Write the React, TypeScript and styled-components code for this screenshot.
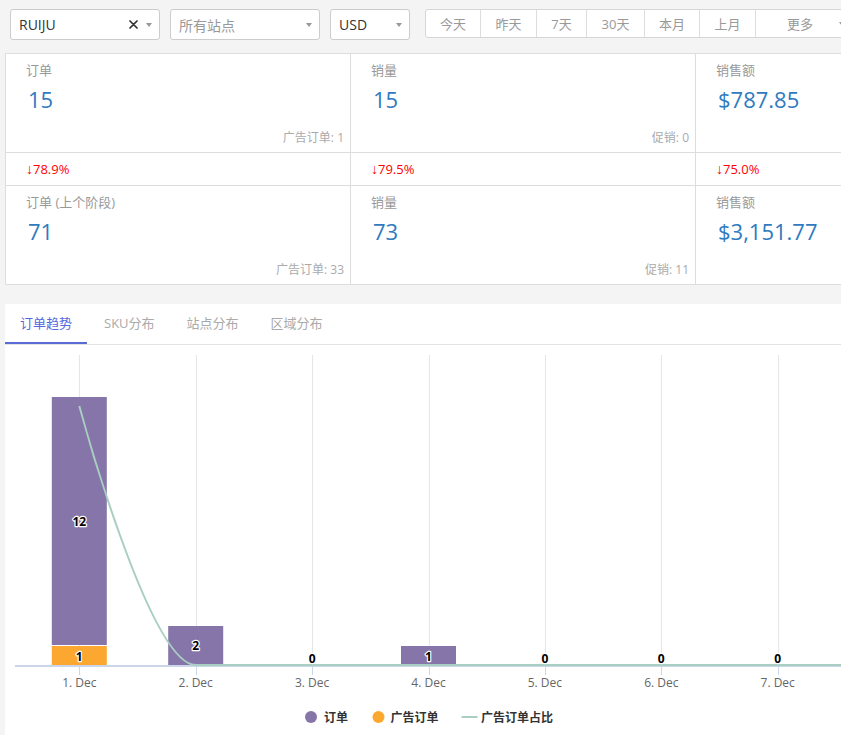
import React from 'react';
import styled, { createGlobalStyle } from 'styled-components';

const GlobalStyle = createGlobalStyle`
  html, body { margin: 0; padding: 0; overflow: hidden; background: #f4f4f4; }
  body { font-family: "Open Sans", "Noto Sans CJK SC", sans-serif; }
`;

const Page = styled.div`
  width: 1050px;
  min-height: 735px;
  background: #f4f4f4;
`;

const TopBar = styled.div`
  display: flex;
  align-items: flex-start;
  padding: 9px 0 0 10px;
`;

const Select = styled.div<{ $w: number; $gap: number }>`
  box-sizing: border-box;
  width: ${p => p.$w}px;
  height: 31px;
  margin-right: ${p => p.$gap}px;
  border: 1px solid #ccc;
  border-radius: 3px;
  background: #fff;
  display: flex;
  align-items: center;
  padding: 0 7px 0 8px;
  font-size: 14px;
`;

const SelectValue = styled.span<{ $placeholder?: boolean }>`
  flex: 1;
  color: ${p => (p.$placeholder ? '#999' : '#333')};
  white-space: nowrap;
`;

const Clear = styled.svg`
  width: 9px;
  height: 9px;
  margin-right: 8px;
`;

const Caret = styled.span<{ $color?: string }>`
  width: 0;
  height: 0;
  border-left: 3.5px solid transparent;
  border-right: 3.5px solid transparent;
  border-top: 4.5px solid ${p => p.$color || '#999'};
`;

const BtnGroup = styled.div`
  display: flex;
  box-sizing: border-box;
  height: 29px;
  border: 1px solid #d6d6d6;
  border-radius: 3px;
  background: #fff;
`;

const Btn = styled.div<{ $w?: number; $first?: boolean }>`
  box-sizing: border-box;
  ${p => (p.$w ? `width: ${p.$w}px;` : 'padding: 0 26px 0 31px;')}
  display: flex;
  align-items: center;
  justify-content: center;
  gap: 26px;
  font-size: 13px;
  color: #999;
  white-space: nowrap;
  border-left: ${p => (p.$first ? 'none' : '1px solid #ddd')};
`;

const Stats = styled.div`
  margin: 13px 0 0 5px;
  display: grid;
  grid-template-columns: repeat(3, 345px);
  width: max-content;
  border-top: 1px solid #ddd;
  border-left: 1px solid #ddd;
  background: #fff;
`;

const StatCell = styled.div`
  box-sizing: border-box;
  height: 99px;
  border-right: 1px solid #ddd;
  border-bottom: 1px solid #ddd;
  padding: 7px 6px 6px 20px;
  display: flex;
  flex-direction: column;
`;

const StatLabel = styled.div`
  font-size: 13px;
  line-height: 18px;
  color: #999;
`;

const StatValue = styled.div`
  margin-top: 5px;
  padding-left: 2px;
  font-size: 22px;
  line-height: 30px;
  color: #2f7bbf;
`;

const StatNote = styled.div`
  margin-top: auto;
  align-self: flex-end;
  font-size: 12px;
  line-height: 16px;
  color: #aaa;
`;

const ChangeCell = styled.div`
  box-sizing: border-box;
  height: 33px;
  border-right: 1px solid #ddd;
  border-bottom: 1px solid #ddd;
  padding-left: 20px;
  display: flex;
  align-items: center;
  font-size: 13px;
  color: #f00;
  white-space: nowrap;
`;

const Arrow = styled.span`
  font-family: "Liberation Sans", "DejaVu Sans", sans-serif;
  font-size: 14px;
`;

const TabPanel = styled.div`
  margin: 19px 0 0 5px;
  background: #fff;
  height: 440px;
`;

const TabBar = styled.div`
  display: flex;
  box-sizing: border-box;
  height: 41px;
  border-bottom: 1px solid #e3e3e3;
`;

const Tab = styled.div<{ $active?: boolean }>`
  box-sizing: border-box;
  height: 40px;
  padding: 0 15px;
  margin-right: 2px;
  line-height: 38px;
  font-size: 13px;
  color: ${p => (p.$active ? '#5867dd' : '#aaa')};
  border-bottom: 2px solid ${p => (p.$active ? '#5b6bd6' : 'transparent')};
`;

const ChartSvg = styled.svg`
  display: block;
  font-family: "Open Sans", "Noto Sans CJK SC", sans-serif;
`;

const stats = [
  { label: '订单', value: '15', note: '广告订单: 1' },
  { label: '销量', value: '15', note: '促销: 0' },
  { label: '销售额', value: '$787.85', note: '' },
];
const changes = ['78.9%', '79.5%', '75.0%'];
const prev = [
  { label: '订单 (上个阶段)', value: '71', note: '广告订单: 33' },
  { label: '销量', value: '73', note: '促销: 11' },
  { label: '销售额', value: '$3,151.77', note: '' },
];

const buttons = [
  { t: '今天', w: 54 },
  { t: '昨天', w: 56 },
  { t: '7天', w: 50 },
  { t: '30天', w: 58 },
  { t: '本月', w: 55 },
  { t: '上月', w: 56 },
];

const PURPLE = '#8675a9';
const ORANGE = '#fca830';
const LINE = '#a9cec2';

const centers = [0, 1, 2, 3, 4, 5, 6].map(i => 74.3 + 116.4 * i);
const days = ['1. Dec', '2. Dec', '3. Dec', '4. Dec', '5. Dec', '6. Dec', '7. Dec'];

const DataLabel: React.FC<{ x: number; y: number; t: string }> = ({ x, y, t }) => (
  <text
    x={x}
    y={y}
    textAnchor="middle"
    dominantBaseline="central"
    fontSize={12}
    fontWeight={700}
    fill="#000"
    stroke="#fff"
    strokeWidth={2.4}
    strokeLinejoin="round"
    paintOrder="stroke"
  >
    {t}
  </text>
);

const Chart: React.FC = () => (
  <ChartSvg width={1040} height={395} viewBox="0 0 1040 395">
    {centers.map((c, i) => (
      <line key={'g' + i} x1={Math.round(c) + 0.5} x2={Math.round(c) + 0.5} y1={10} y2={321} stroke="#e6e6e6" strokeWidth={1} />
    ))}
    <rect x={centers[0] - 27.5} y={52} width={55} height={248} fill={PURPLE} />
    <rect x={centers[0] - 27.5} y={301} width={55} height={19} fill={ORANGE} />
    <rect x={centers[1] - 27.5} y={281} width={55} height={39} fill={PURPLE} />
    <rect x={centers[3] - 27.5} y={301} width={55} height={19} fill={PURPLE} />
    <line x1={10} x2={1040} y1={321} y2={321} stroke="#ccd6eb" strokeWidth={2} />
    {centers.map((c, i) => (
      <line key={'t' + i} x1={Math.round(c) + 0.5} x2={Math.round(c) + 0.5} y1={321} y2={330} stroke="#ccd6eb" strokeWidth={1} />
    ))}
    <path
      d={`M ${centers[0]} 61 C ${centers[0]} 61 ${centers[0] + 69.9} 320 ${centers[1]} 320 L 1040 320`}
      fill="none"
      stroke={LINE}
      strokeWidth={2}
    />
    <DataLabel x={centers[0]} y={176.5} t="12" />
    <DataLabel x={centers[0]} y={311} t="1" />
    <DataLabel x={centers[1]} y={300.5} t="2" />
    <DataLabel x={centers[2]} y={313.5} t="0" />
    <DataLabel x={centers[3]} y={311} t="1" />
    <DataLabel x={centers[4]} y={313.5} t="0" />
    <DataLabel x={centers[5]} y={313.5} t="0" />
    <DataLabel x={centers[6]} y={313.5} t="0" />
    {days.map((d, i) => (
      <text key={d} x={centers[i]} y={341.5} textAnchor="middle" fontSize={12} fill="#666">
        {d}
      </text>
    ))}
    <circle cx={306} cy={372} r={6} fill={PURPLE} />
    <text x={319} y={376.5} fontSize={12} fontWeight={700} fill="#333">订单</text>
    <circle cx={373.5} cy={372} r={6} fill={ORANGE} />
    <text x={385.5} y={376.5} fontSize={12} fontWeight={700} fill="#333">广告订单</text>
    <line x1={456.5} x2={472.5} y1={372} y2={372} stroke={LINE} strokeWidth={2} />
    <text x={476} y={376.5} fontSize={12} fontWeight={700} fill="#333">广告订单占比</text>
  </ChartSvg>
);

const StatBlock: React.FC<{ label: string; value: string; note: string }> = ({ label, value, note }) => (
  <StatCell>
    <StatLabel>{label}</StatLabel>
    <StatValue>{value}</StatValue>
    {note && <StatNote>{note}</StatNote>}
  </StatCell>
);

export default function App() {
  return (
    <Page>
      <GlobalStyle />
      <TopBar>
        <Select $w={150} $gap={10}>
          <SelectValue>RUIJU</SelectValue>
          <Clear viewBox="0 0 9 9">
            <path d="M1 1 L8 8 M8 1 L1 8" stroke="#333" strokeWidth={1.7} strokeLinecap="round" />
          </Clear>
          <Caret />
        </Select>
        <Select $w={150} $gap={10}>
          <SelectValue $placeholder>所有站点</SelectValue>
          <Caret />
        </Select>
        <Select $w={80} $gap={15}>
          <SelectValue>USD</SelectValue>
          <Caret />
        </Select>
        <BtnGroup>
          {buttons.map((b, i) => (
            <Btn key={b.t} $w={b.w} $first={i === 0}>
              {b.t}
            </Btn>
          ))}
          <Btn>
            更多
            <Caret $color="#999" />
          </Btn>
        </BtnGroup>
      </TopBar>

      <Stats>
        {stats.map(s => (
          <StatBlock key={'a' + s.label} {...s} />
        ))}
        {changes.map(c => (
          <ChangeCell key={c}>
            <Arrow>↓</Arrow>
            {c}
          </ChangeCell>
        ))}
        {prev.map(s => (
          <StatBlock key={'b' + s.label} {...s} />
        ))}
      </Stats>

      <TabPanel>
        <TabBar>
          <Tab $active>订单趋势</Tab>
          <Tab>SKU分布</Tab>
          <Tab>站点分布</Tab>
          <Tab>区域分布</Tab>
        </TabBar>
        <Chart />
      </TabPanel>
    </Page>
  );
}
